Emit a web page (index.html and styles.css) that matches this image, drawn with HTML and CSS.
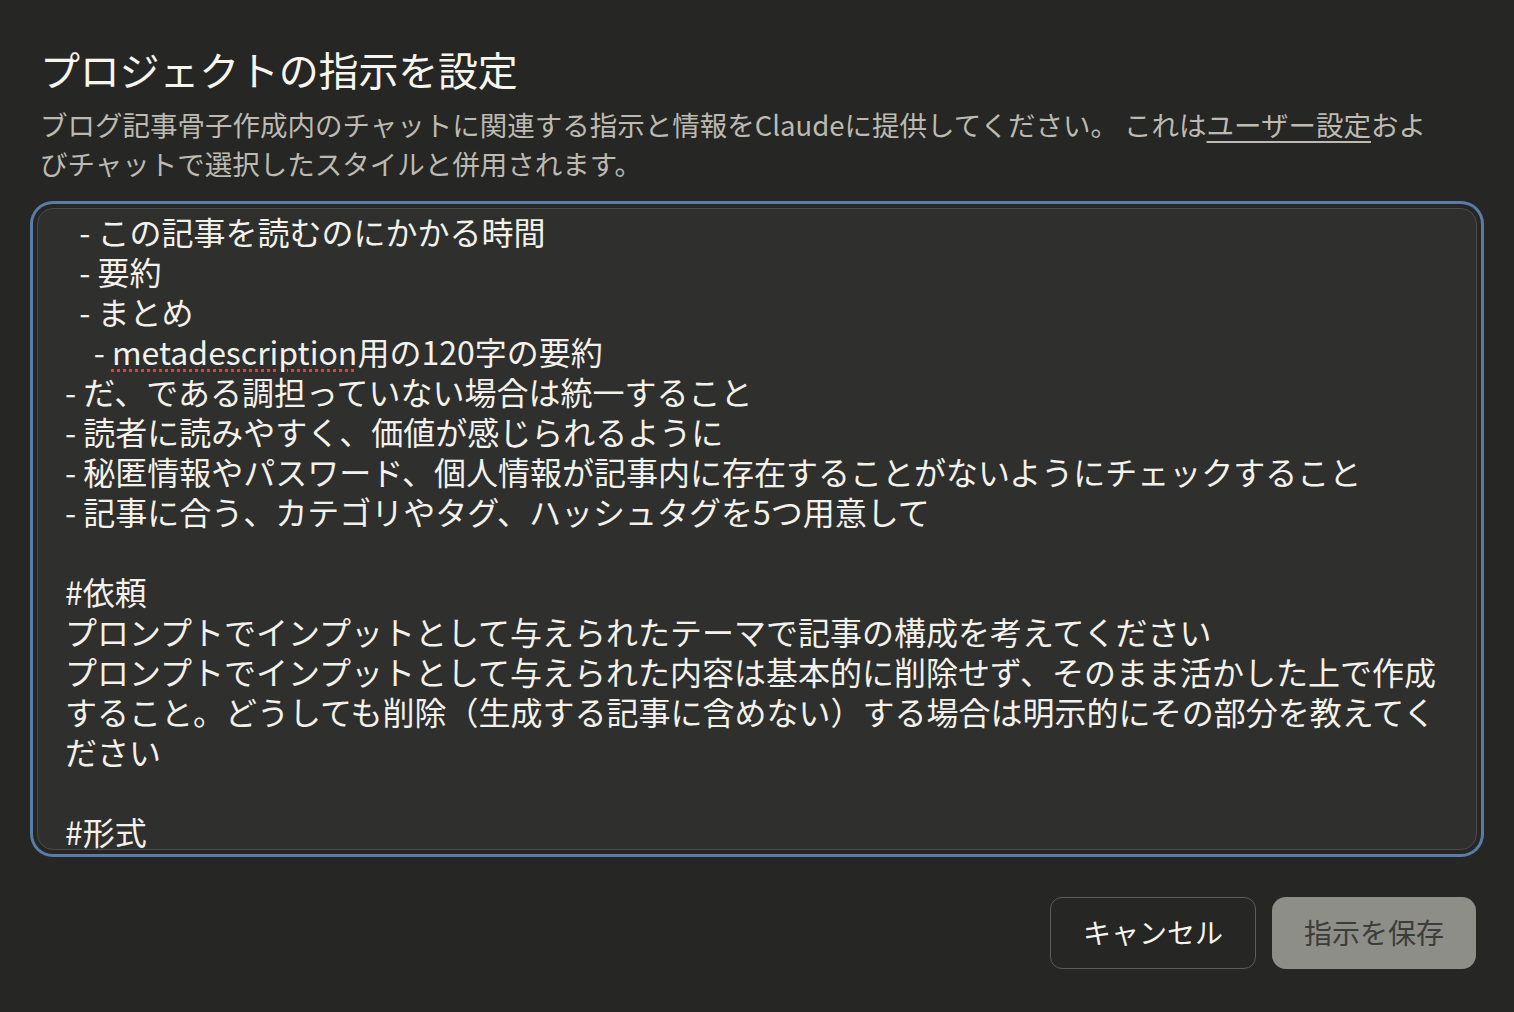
FILE: index.html
```html
<!DOCTYPE html>
<html lang="ja">
<head>
<meta charset="utf-8">
<title>プロジェクトの指示を設定</title>
<link rel="stylesheet" href="styles.css">
</head>
<body>
<div class="dialog">
  <h1 class="title">プロジェクトの指示を設定</h1>
  <p class="desc">ブログ記事骨子作成内のチャットに関連する指示と情報をClaudeに提供してください。 これは<span class="link">ユーザー設定</span>およびチャットで選択したスタイルと併用されます。</p>
  <div class="field">
    <div class="field-text">  - この記事を読むのにかかる時間
  - 要約
  - まとめ
    - <span class="spell">metadescription</span>用の120字の要約
- だ、である調担っていない場合は統一すること
- 読者に読みやすく、価値が感じられるように
- 秘匿情報やパスワード、個人情報が記事内に存在することがないようにチェックすること
- 記事に合う、カテゴリやタグ、ハッシュタグを5つ用意して

#依頼
プロンプトでインプットとして与えられたテーマで記事の構成を考えてください
プロンプトでインプットとして与えられた内容は基本的に削除せず、そのまま活かした上で作成すること。どうしても削除（生成する記事に含めない）する場合は明示的にその部分を教えてください

#形式
</div>
  </div>
  <div class="actions">
    <button class="btn btn-cancel">キャンセル</button>
    <button class="btn btn-save">指示を保存</button>
  </div>
</div>
</body>
</html>
```

FILE: styles.css
```css
html, body {
  margin: 0;
  padding: 0;
  background: #262624;
  height: 100%;
}

body {
  font-family: "Noto Sans CJK JP", "Noto Sans", sans-serif;
  color: #f4f3ee;
}

.dialog {
  padding: 41px 40px 0 40px;
  display: flex;
  flex-direction: column;
}

.title {
  margin: 0;
  font-size: 40px;
  line-height: 56px;
  font-weight: 400;
  color: #f6f5f0;
  letter-spacing: -0.2px;
}

.desc {
  margin: 8px 30px 0 0;
  font-size: 27.5px;
  line-height: 39px;
  color: #bcbab2;
  font-weight: 400;
}

.link {
  text-decoration: underline;
  text-decoration-thickness: 2px;
  text-underline-offset: 5px;
  text-decoration-color: #bcbab2;
}

.field {
  margin: 25px -3px 0 -3px;
  height: 642px;
  box-sizing: border-box;
  border: 1px solid #4c4b48;
  border-radius: 16px;
  background: #2f2f2d;
  box-shadow: 0 0 0 4px #262624, 0 0 0 7px #5a7ca9;
  overflow: hidden;
}

.field-text {
  padding: 2px 28px 0 27px;
  font-size: 32px;
  line-height: 40px;
  white-space: pre-wrap;
  color: #f2f1ec;
}

.spell {
  text-decoration: underline dotted #d8473a;
  text-decoration-thickness: 3px;
  text-underline-offset: 4px;
}

.actions {
  display: flex;
  justify-content: flex-end;
  gap: 16px;
  margin-top: 47px;
}

.btn {
  height: 72px;
  box-sizing: border-box;
  font-family: "Noto Sans CJK JP", "Noto Sans", sans-serif;
  font-size: 28px;
  line-height: 1;
  padding: 0 0 3px 0;
  cursor: pointer;
}

.btn-cancel {
  width: 206px;
  background: transparent;
  border: 1px solid #5d5c58;
  border-radius: 12px;
  color: #f4f3ee;
}

.btn-save {
  width: 204px;
  background: #8e8e89;
  border: none;
  border-radius: 14px;
  color: #3c3c3a;
  margin-right: -2px;
}
```
